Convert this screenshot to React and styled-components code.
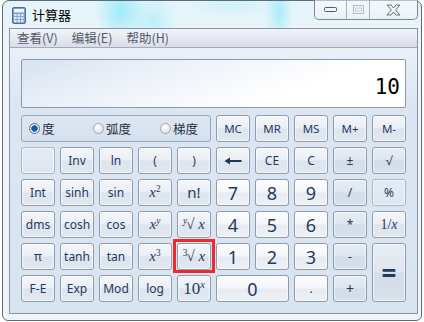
import React from 'react'
import styled, { createGlobalStyle, css } from 'styled-components'

const GlobalStyle = createGlobalStyle`
  html, body {
    margin: 0;
    padding: 0;
    background: #ffffff;
  }
  body {
    font-family: "Noto Sans", "Noto Sans CJK SC", sans-serif;
  }
`

const CalcIcon = () => (
  <svg width="14" height="17" viewBox="0 0 14 17">
    <rect x="0.5" y="0.5" width="13" height="16" rx="1.5" fill="#7d9fc4" stroke="#4d6f96" />
    <rect x="2" y="2" width="10" height="3.5" fill="#eaf4fb" />
    {[0, 1, 2].map(r =>
      [0, 1, 2].map(c => (
        <rect key={r + '-' + c} x={2 + c * 3.5} y={7 + r * 3} width="2.6" height="2.2" fill="#dfe8f2" />
      ))
    )}
  </svg>
)

const MinGlyph = () => (
  <svg width="14" height="6" viewBox="0 0 14 6">
    <rect x="0.5" y="0.5" width="12" height="4" rx="1" fill="#f4f4f4" stroke="#555b66" />
  </svg>
)

const MaxGlyph = () => (
  <svg width="11" height="9" viewBox="0 0 11 9">
    <rect x="0.5" y="0.5" width="10" height="8" fill="none" stroke="#b8bec7" />
    <rect x="2.5" y="3" width="6" height="3" fill="none" stroke="#c6ccd4" />
  </svg>
)

const CloseGlyph = () => (
  <svg width="15" height="12" viewBox="0 0 15 12">
    <path
      d="M1 1 H5 L7.5 4 L10 1 H14 L9.6 6 L14 11 H10 L7.5 8 L5 11 H1 L5.4 6 Z"
      fill="#f2f2f2"
      stroke="#6b717b"
      strokeWidth="1"
      strokeLinejoin="round"
    />
  </svg>
)

const BackArrow = () => (
  <svg width="18" height="8" viewBox="0 0 18 8">
    <path d="M0.5 4 L6 0.5 V3 H17.5 V5 H6 V7.5 Z" fill="#1e3557" />
  </svg>
)

const Window = styled.div`
  position: relative;
  box-sizing: border-box;
  margin-left: 2px;
  width: 420px;
  height: 321px;
  border: 1px solid #5f6b78;
  border-radius: 7px 7px 6px 6px;
  padding: 0 3px 6px 6px;
  display: flex;
  flex-direction: column;
  background:
    radial-gradient(ellipse 26px 34px at 118px 10px, rgba(140, 232, 248, 0.8), transparent),
    radial-gradient(ellipse 24px 30px at 150px 22px, rgba(160, 236, 250, 0.6), transparent),
    radial-gradient(ellipse 14px 30px at 276px 12px, rgba(150, 234, 250, 0.75), transparent),
    radial-gradient(ellipse 44px 14px at 230px 4px, rgba(190, 242, 250, 0.55), transparent),
    linear-gradient(180deg, #e3f4fa 0%, #ecf5f9 12%, #f0f5f9 100%);
`

const TitleBar = styled.div`
  height: 27px;
  display: flex;
  align-items: flex-start;
  flex-shrink: 0;
`

const AppIcon = styled.span`
  display: flex;
  margin: 6px 0 0 3px;
`

const Title = styled.span`
  margin: 5px 0 0 6px;
  font-family: "Noto Sans CJK SC", sans-serif;
  font-size: 13px;
  line-height: 17px;
  color: #000000;
`

const Caption = styled.div`
  margin: -1px 0 0 auto;
  display: flex;
  height: 19px;
  border: 1px solid #7f8895;
  border-top: none;
  border-radius: 0 0 5px 5px;
  overflow: hidden;
  background: linear-gradient(180deg, rgba(255,255,255,0.55), rgba(235,242,248,0.7));
`

const CapButton = styled.span`
  width: ${p => p.$w}px;
  display: flex;
  align-items: center;
  justify-content: center;
  border-left: ${p => (p.$first ? 'none' : '1px solid #aab3be')};
`

const Client = styled.div`
  flex: 1;
  display: flex;
  flex-direction: column;
  border: 1px solid #8793a2;
  background: #dae5f2;
`

const MenuBar = styled.div`
  height: 18px;
  display: flex;
  align-items: center;
  border-bottom: 1px solid #a3abb8;
  background: linear-gradient(180deg, #f1f3f9 0%, #e6e9f2 50%, #d9dde9 100%);
`

const MenuItem = styled.span`
  padding: 0 7px;
  font-family: "Noto Sans CJK SC", sans-serif;
  font-size: 12.5px;
  line-height: 18px;
  color: #555a64;
`

const Panel = styled.div`
  flex: 1;
  padding: 11px 11px 10px 11px;
  display: flex;
  flex-direction: column;
  gap: 7px;
  background: linear-gradient(180deg, #e9f0f8 0%, #dce6f3 20%, #d9e4f1 100%);
`

const Display = styled.div`
  height: 49px;
  box-sizing: border-box;
  border: 1px solid #8e9aab;
  border-radius: 2px;
  display: flex;
  align-items: flex-end;
  justify-content: flex-end;
  padding: 0 5px 8px 0;
  background: linear-gradient(160deg, #d7e3f1 0%, #eef3fa 35%, #ffffff 70%);
  font-family: "DejaVu Sans Mono", "Liberation Mono", monospace;
  font-size: 21px;
  line-height: 24px;
  color: #000000;
`

const Keypad = styled.div`
  display: grid;
  grid-template-columns: repeat(10, 34px);
  grid-auto-rows: 27px;
  column-gap: 5px;
  row-gap: 5px;
`

const RadioBox = styled.div`
  grid-column: span 5;
  box-sizing: border-box;
  border: 1px solid #99a7b8;
  border-radius: 3px;
  display: grid;
  grid-template-columns: 64px 67px 1fr;
  align-items: center;
  padding-left: 7px;
  background: linear-gradient(180deg, #dde7f3, #d5e0ee);
`

const RadioItem = styled.span`
  display: flex;
  align-items: center;
  gap: 2px;
  font-family: "Noto Sans CJK SC", sans-serif;
  font-size: 12.5px;
  color: #1f2e44;
`

const RadioDot = styled.span`
  width: 11px;
  height: 11px;
  box-sizing: border-box;
  border-radius: 50%;
  border: 1px solid ${p => (p.$on ? '#4f6f97' : '#a0a8b2')};
  background: ${p =>
    p.$on
      ? 'radial-gradient(circle at 50% 50%, #1f5a9c 0 2.5px, #59a3dc 3.4px, #eef2f6 3.6px, #dfe5ec 100%)'
      : 'radial-gradient(circle at 40% 35%, #ffffff 0%, #e9ecef 55%, #cfd5dc 100%)'};
`

const kinds = {
  fn: css`
    background: linear-gradient(180deg, #f3f6fa 0%, #ebeff5 48%, #dde4ed 52%, #e3e8ef 100%);
    border-color: #8c9bb0;
  `,
  num: css`
    background: linear-gradient(180deg, #fcfdfe 0%, #f4f6f9 48%, #e7ebf1 52%, #eef1f5 100%);
    border-color: #8c9bb0;
  `,
  op: css`
    background: linear-gradient(180deg, #e7edf4 0%, #dfe6ef 48%, #d3dce7 52%, #d9e1eb 100%);
    border-color: #8c9bb0;
  `,
  off: css`
    background: linear-gradient(180deg, #e4ebf4 0%, #dee6f0 100%);
    border-color: #aab6c5;
  `,
}

const Key = styled.button`
  position: relative;
  grid-column: span ${p => p.$w || 1};
  grid-row: span ${p => p.$h || 1};
  box-sizing: border-box;
  margin: 0;
  padding: 0;
  border: 1px solid;
  border-radius: 3px;
  display: flex;
  align-items: center;
  justify-content: center;
  font-family: "Noto Sans", "Open Sans", sans-serif;
  font-size: ${p => p.$size || 12}px;
  font-weight: ${p => (p.$bold ? 700 : 400)};
  line-height: 1;
  color: #1e3a60;
  box-shadow: inset 0 0 0 1px rgba(255, 255, 255, 0.55);
  ${p => kinds[p.$kind || 'fn']}
  ${p =>
    p.$marked &&
    css`
      &::after {
        content: '';
        position: absolute;
        inset: -5px -5px -4px -5px;
        border: 3px solid #ea2b2b;
        pointer-events: none;
      }
    `}
`

const Math = styled.span`
  font-family: "Liberation Serif", "DejaVu Serif", serif;
  font-size: ${p => p.$size || 15}px;
  color: #1e3a60;
  white-space: nowrap;

  i {
    font-style: italic;
  }
  sup {
    font-size: 0.62em;
    vertical-align: 0.55em;
    line-height: 0;
  }
`

const Root = styled.sup`
  margin-right: -1px;
`

const sq = label => (
  <Math>
    <i>x</i>
    <sup>{label}</sup>
  </Math>
)

const rootOf = n => (
  <Math>
    <Root>{n}</Root>√<i> x</i>
  </Math>
)

const rows = [
  [
    { label: '', kind: 'off' },
    { label: 'Inv' },
    { label: 'ln' },
    { label: '(' },
    { label: ')' },
    { label: <BackArrow />, kind: 'fn' },
    { label: 'CE' },
    { label: 'C' },
    { label: '±', kind: 'op' },
    { label: '√', kind: 'op' },
  ],
  [
    { label: 'Int' },
    { label: 'sinh' },
    { label: 'sin' },
    { label: sq('2') },
    { label: 'n!', size: 15 },
    { label: '7', kind: 'num', size: 18 },
    { label: '8', kind: 'num', size: 18 },
    { label: '9', kind: 'num', size: 18 },
    { label: '/', kind: 'op' },
    { label: '%', kind: 'off' },
  ],
  [
    { label: 'dms' },
    { label: 'cosh' },
    { label: 'cos' },
    { label: sq(<i>y</i>) },
    { label: rootOf(<i>y</i>) },
    { label: '4', kind: 'num', size: 18 },
    { label: '5', kind: 'num', size: 18 },
    { label: '6', kind: 'num', size: 18 },
    { label: '*', kind: 'op' },
    {
      label: (
        <Math $size={14}>
          1/<i>x</i>
        </Math>
      ),
    },
  ],
  [
    { label: 'π' },
    { label: 'tanh' },
    { label: 'tan' },
    { label: sq('3') },
    { label: rootOf('3'), marked: true },
    { label: '1', kind: 'num', size: 18 },
    { label: '2', kind: 'num', size: 18 },
    { label: '3', kind: 'num', size: 18 },
    { label: '-', kind: 'op' },
    { label: '=', kind: 'op', h: 2, size: 26, bold: true },
  ],
  [
    { label: 'F-E' },
    { label: 'Exp' },
    { label: 'Mod' },
    { label: 'log' },
    {
      label: (
        <Math $size={17}>
          10<sup><i>x</i></sup>
        </Math>
      ),
    },
    { label: '0', kind: 'num', size: 18, w: 2 },
    { label: '.', kind: 'num' },
    { label: '+', kind: 'op', size: 14 },
  ],
]

const memory = ['MC', 'MR', 'MS', 'M+', 'M-']

export default function App() {
  return (
    <>
      <GlobalStyle />
      <Window>
        <TitleBar>
          <AppIcon>
            <CalcIcon />
          </AppIcon>
          <Title>计算器</Title>
          <Caption>
            <CapButton $w={31} $first>
              <MinGlyph />
            </CapButton>
            <CapButton $w={22}>
              <MaxGlyph />
            </CapButton>
            <CapButton $w={47}>
              <CloseGlyph />
            </CapButton>
          </Caption>
        </TitleBar>

        <Client>
          <MenuBar>
            <MenuItem>查看(V)</MenuItem>
            <MenuItem>编辑(E)</MenuItem>
            <MenuItem>帮助(H)</MenuItem>
          </MenuBar>

          <Panel>
            <Display>10</Display>

            <Keypad>
              <RadioBox>
                <RadioItem>
                  <RadioDot $on />度
                </RadioItem>
                <RadioItem>
                  <RadioDot />弧度
                </RadioItem>
                <RadioItem>
                  <RadioDot />梯度
                </RadioItem>
              </RadioBox>
              {memory.map(m => (
                <Key key={m} $kind="fn" $size={11.5}>
                  {m}
                </Key>
              ))}

              {rows.flat().map((k, i) => (
                <Key
                  key={i}
                  $kind={k.kind}
                  $w={k.w}
                  $h={k.h}
                  $size={k.size}
                  $bold={k.bold}
                  $marked={k.marked}
                >
                  {k.label}
                </Key>
              ))}
            </Keypad>
          </Panel>
        </Client>
      </Window>
    </>
  )
}
